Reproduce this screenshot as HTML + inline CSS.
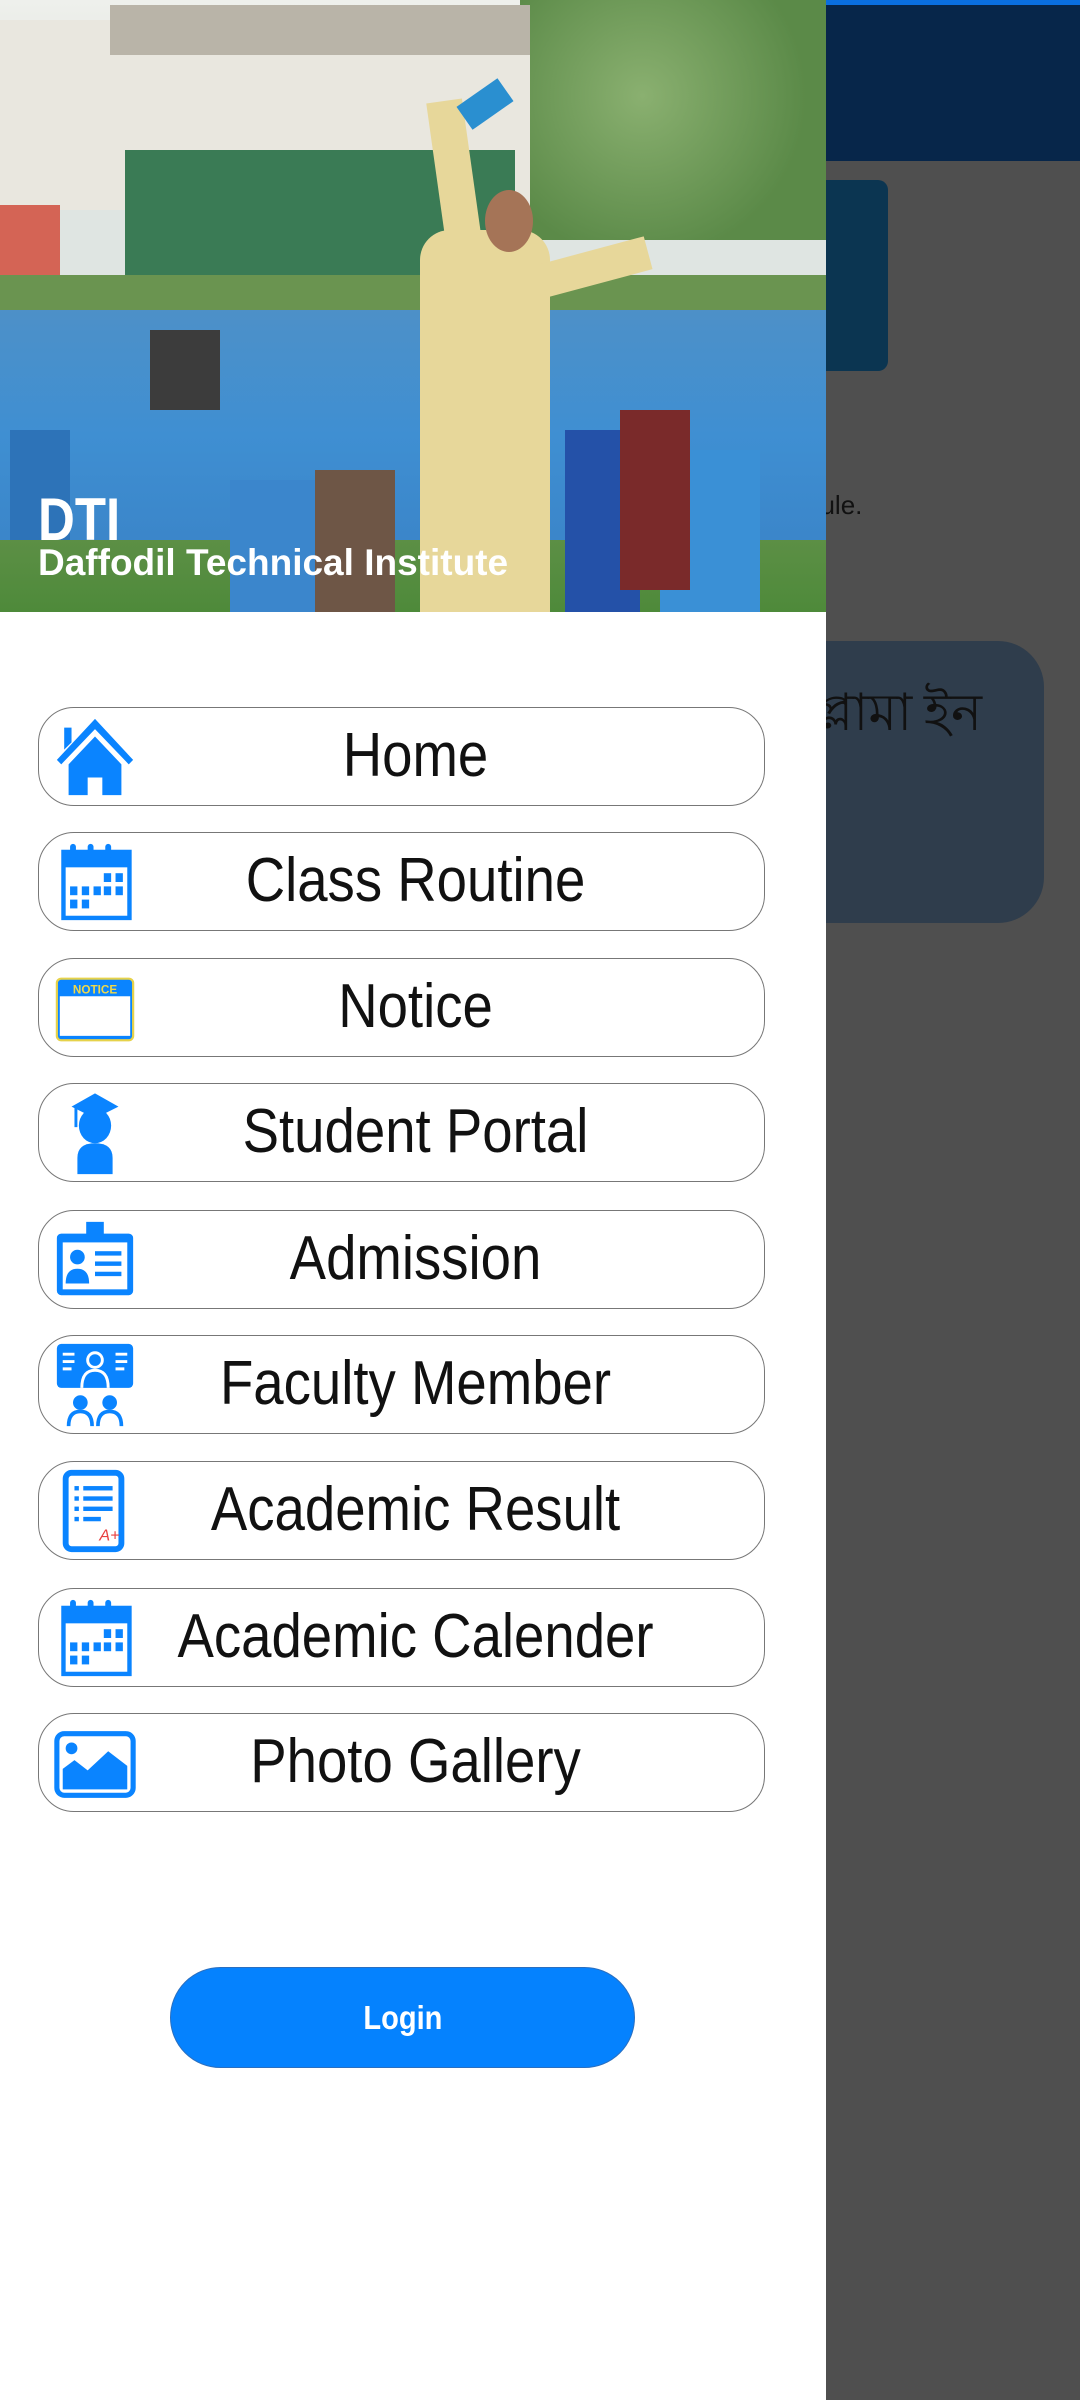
<!DOCTYPE html>
<html><head><meta charset="utf-8">
<style>
*{margin:0;padding:0;box-sizing:border-box}
html,body{width:1080px;height:2400px;overflow:hidden;background:#4f4f4f;font-family:"Liberation Sans",sans-serif}
#bg{position:absolute;left:0;top:0;width:1080px;height:2400px;background:#4f4f4f}
#topbar{position:absolute;left:826px;top:0;width:254px;height:161px;background:#07264a;border-top:5px solid #0a6fe0}
#card1{position:absolute;left:800px;top:180px;width:88px;height:191px;background:#0b3551;border-radius:10px}
#dule{position:absolute;left:806px;top:490px;font:26px "Liberation Sans",sans-serif;color:#111}
#card2{position:absolute;left:780px;top:641px;width:264px;height:282px;background:#2f3d4c;border-radius:0 46px 46px 0}
#bn{position:absolute;right:98px;top:670px;font:52px "Noto Sans CJK SC","Liberation Sans",sans-serif;color:#111;white-space:nowrap}
#drawer{position:absolute;left:0;top:0;width:826px;height:2400px;background:#fff;overflow:hidden}
#photo{position:absolute;left:0;top:0;width:826px;height:612px;overflow:hidden;background:#dfe5e2}
.p{position:absolute}
.btn{position:absolute;left:38px;width:727px;height:99px;border:1.5px solid #777;border-radius:36px;background:#fff}
.btn span{position:absolute;left:0;right:0;text-align:center;top:12px;font-size:62px;color:#111;padding-left:20px;transform:scaleX(0.88);transform-origin:56% 50%;white-space:nowrap}
.btn svg{position:absolute;left:12px;top:5px;width:88px;height:88px}
#login{position:absolute;left:170px;top:1967px;width:465px;height:101px;border-radius:51px;background:#0582fe;border:1px solid #2a6fc0;color:#fff;font:bold 33px "Liberation Sans",sans-serif;text-align:center;line-height:99px}
#login b{display:inline-block;transform:scaleX(0.88)}
</style></head><body>
<div id="bg"></div>
<div id="topbar"></div>
<div id="card1"></div>
<div id="dule">dule.</div>
<div id="card2"></div>
<div id="bn">প্লামা ইন</div>
<div id="drawer">
 <div id="photo">
  <div class="p" style="left:0;top:0;width:826px;height:200px;background:linear-gradient(#eef0ec,#d8ddd5)"></div>
  <div class="p" style="left:520px;top:0;width:306px;height:240px;background:radial-gradient(circle at 40% 40%,#8ab070,#5b8a48 70%)"></div>
  <div class="p" style="left:0;top:20px;width:530px;height:190px;background:#e9e7df"></div>
  <div class="p" style="left:110px;top:5px;width:420px;height:50px;background:#b9b4a8"></div>
  <div class="p" style="left:125px;top:150px;width:390px;height:130px;background:#3a7b55"></div>
  <div class="p" style="left:0;top:205px;width:60px;height:70px;background:#d46455"></div>
  <div class="p" style="left:0;top:275px;width:826px;height:60px;background:#6a9450"></div>
  <div class="p" style="left:0;top:310px;width:826px;height:250px;background:linear-gradient(#4d90c8,#3f8fd2 50%,#3a84c8)"></div>
  <div class="p" style="left:0;top:540px;width:826px;height:72px;background:linear-gradient(#5c8f45,#4e8a3a)"></div>
  <div class="p" style="left:10px;top:430px;width:60px;height:110px;background:#2d73b8"></div>
  <div class="p" style="left:150px;top:330px;width:70px;height:80px;background:#3c3c3c"></div>
  <div class="p" style="left:230px;top:480px;width:110px;height:132px;background:#3b86cc"></div>
  <div class="p" style="left:660px;top:450px;width:100px;height:162px;background:#3a90d6"></div>
  <div class="p" style="left:565px;top:430px;width:75px;height:182px;background:#2451a8"></div>
  <div class="p" style="left:620px;top:410px;width:70px;height:180px;background:#7a2a2a"></div>
  <div class="p" style="left:315px;top:470px;width:80px;height:142px;background:#6e5646"></div>
  <div class="p" style="left:420px;top:230px;width:130px;height:382px;background:#e7d79a;border-radius:30px 30px 0 0"></div>
  <div class="p" style="left:440px;top:100px;width:36px;height:200px;background:#e7d79a;transform:rotate(-8deg)"></div>
  <div class="p" style="left:540px;top:250px;width:110px;height:34px;background:#e7d79a;transform:rotate(-15deg)"></div>
  <div class="p" style="left:485px;top:190px;width:48px;height:62px;background:#a57457;border-radius:50%"></div>
  <div class="p" style="left:460px;top:90px;width:50px;height:28px;background:#2a8fd0;transform:rotate(-35deg)"></div>
  <div class="p" style="left:38px;top:485px;font:bold 60px 'Liberation Sans',sans-serif;color:#fff;transform:scaleX(0.85);transform-origin:0 0">DTI</div>
  <div class="p" style="left:38px;top:542px;font:bold 37px 'Liberation Sans',sans-serif;color:#fff;white-space:nowrap">Daffodil Technical Institute</div>
 </div>

 <div class="btn" style="top:707px"><svg viewBox="0 0 60 60"><path d="M30 4L4 32l3 3 23-24 23 24 3-3z M9 10h5v10l-5 5z" fill="#0a84ff"/><path d="M12 35L30 16l18 19v21H35V44H25v12H12z" fill="#0a84ff"/></svg><span>Home</span></div>
 <div class="btn" style="top:832px"><svg viewBox="0 0 60 60"><rect x="7" y="8" width="48" height="48" fill="#0a84ff"/><rect x="10" y="20" width="42" height="33" fill="#fff"/><g fill="#0a84ff"><rect x="13" y="4" width="4" height="10" rx="2"/><rect x="25" y="4" width="4" height="10" rx="2"/><rect x="37" y="4" width="4" height="10" rx="2"/><rect x="36" y="24" width="5" height="6"/><rect x="44" y="24" width="5" height="6"/><rect x="13" y="33" width="5" height="6"/><rect x="21" y="33" width="5" height="6"/><rect x="29" y="33" width="5" height="6"/><rect x="36" y="33" width="5" height="6"/><rect x="44" y="33" width="5" height="6"/><rect x="13" y="42" width="5" height="6"/><rect x="21" y="42" width="5" height="6"/></g></svg><span>Class Routine</span></div>
 <div class="btn" style="top:958px"><svg viewBox="0 0 60 60"><rect x="4" y="10" width="52" height="42" rx="3" fill="#0a84ff" stroke="#e6d24a" stroke-width="1.5"/><rect x="6" y="22" width="48" height="27" fill="#fff"/><text x="30" y="20" text-anchor="middle" font-family="Liberation Sans" font-weight="bold" font-size="8" fill="#f0d84a">NOTICE</text></svg><span>Notice</span></div>
 <div class="btn" style="top:1083px"><svg viewBox="0 0 60 60"><path d="M30 3L14 12l16 8 16-8z" fill="#0a84ff"/><rect x="16" y="12" width="2" height="14" fill="#0a84ff"/><ellipse cx="30" cy="25" rx="11" ry="12" fill="#0a84ff"/><path d="M18 58V47q0-10 12-10t12 10v11z" fill="#0a84ff"/></svg><span>Student Portal</span></div>
 <div class="btn" style="top:1210px"><svg viewBox="0 0 60 60"><rect x="24" y="4" width="12" height="10" fill="#0a84ff"/><rect x="4" y="12" width="52" height="42" rx="3" fill="#0a84ff"/><rect x="8" y="18" width="44" height="32" fill="#fff"/><circle cx="18" cy="28" r="5" fill="#0a84ff"/><path d="M10 46q0-10 8-10t8 10z" fill="#0a84ff"/><g fill="#0a84ff"><rect x="30" y="24" width="18" height="3"/><rect x="30" y="31" width="18" height="3"/><rect x="30" y="38" width="18" height="3"/></g></svg><span>Admission</span></div>
 <div class="btn" style="top:1335px"><svg viewBox="0 0 60 60"><rect x="4" y="2" width="52" height="30" rx="3" fill="#0a84ff"/><circle cx="30" cy="13" r="5" fill="none" stroke="#fff" stroke-width="2"/><path d="M21 32q0-12 9-12t9 12" fill="none" stroke="#fff" stroke-width="2"/><g stroke="#fff" stroke-width="2"><path d="M8 9h8M8 14h8M8 19h6M44 9h8M44 14h8M44 19h6"/></g><circle cx="20" cy="42" r="5" fill="#0a84ff"/><circle cx="40" cy="42" r="5" fill="#0a84ff"/><path d="M12 58q0-10 8-10t8 10M32 58q0-10 8-10t8 10" fill="none" stroke="#0a84ff" stroke-width="2.5"/></svg><span>Faculty Member</span></div>
 <div class="btn" style="top:1461px"><svg viewBox="0 0 60 60"><rect x="10" y="4" width="38" height="52" rx="4" fill="none" stroke="#0a84ff" stroke-width="4"/><g fill="#0a84ff"><rect x="16" y="13" width="3" height="3"/><rect x="22" y="13" width="20" height="3"/><rect x="16" y="20" width="3" height="3"/><rect x="22" y="20" width="20" height="3"/><rect x="16" y="27" width="3" height="3"/><rect x="22" y="27" width="20" height="3"/><rect x="16" y="34" width="3" height="3"/><rect x="22" y="34" width="12" height="3"/></g><text x="33" y="50" font-family="Liberation Sans" font-size="11" font-style="italic" fill="#e84040">A+</text></svg><span>Academic Result</span></div>
 <div class="btn" style="top:1588px"><svg viewBox="0 0 60 60"><rect x="7" y="8" width="48" height="48" fill="#0a84ff"/><rect x="10" y="20" width="42" height="33" fill="#fff"/><g fill="#0a84ff"><rect x="13" y="4" width="4" height="10" rx="2"/><rect x="25" y="4" width="4" height="10" rx="2"/><rect x="37" y="4" width="4" height="10" rx="2"/><rect x="36" y="24" width="5" height="6"/><rect x="44" y="24" width="5" height="6"/><rect x="13" y="33" width="5" height="6"/><rect x="21" y="33" width="5" height="6"/><rect x="29" y="33" width="5" height="6"/><rect x="36" y="33" width="5" height="6"/><rect x="44" y="33" width="5" height="6"/><rect x="13" y="42" width="5" height="6"/><rect x="21" y="42" width="5" height="6"/></g></svg><span>Academic Calender</span></div>
 <div class="btn" style="top:1713px"><svg viewBox="0 0 60 60"><rect x="4" y="10" width="52" height="42" rx="5" fill="none" stroke="#0a84ff" stroke-width="3.5"/><circle cx="14" cy="20" r="4" fill="#0a84ff"/><path d="M8 48V34l8-6 9 7 14-13 13 10v16z" fill="#0a84ff"/></svg><span>Photo Gallery</span></div>

 <div id="login"><b>Login</b></div>
</div>
</body></html>
